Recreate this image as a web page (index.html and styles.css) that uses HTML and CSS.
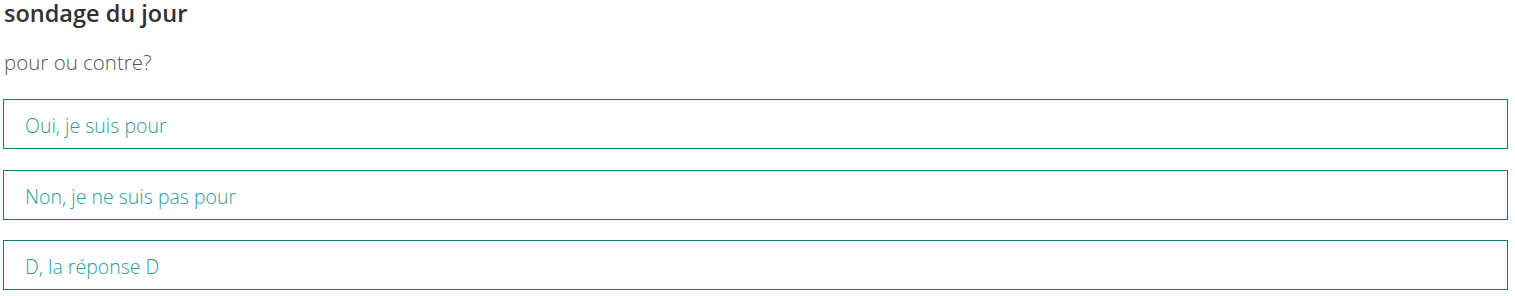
FILE: index.html
```html
<!DOCTYPE html>
<html lang="fr">
<head>
    <meta charset="UTF-8">
    <meta name="viewport" content="width=device-width, initial-scale=1.0">
    <title>Sondage du jour</title>
    <link rel="stylesheet" href="styles.css">
</head>
<body>
<div class="poll">
    <h1 class="poll-title">sondage du jour</h1>
    <p class="poll-question">pour ou contre?</p>

    <ul class="choices">
        <li class="choice">Oui, je suis pour</li>
        <li class="choice">Non, je ne suis pas pour</li>
        <li class="choice">D, la réponse D</li>
    </ul>
</div>
</body>
</html>
```

FILE: styles.css
```css
:root {
    --teal: #0f7b78;
    --teal-text: #2e9c9a;
    --text-dark: #323130;
    --text-gray: #555;
}

body, html {
    margin: 0;
    padding: 0;
    background: #fff;
    font-family: 'Open Sans', 'Noto Sans', sans-serif;
}

.poll {
    padding: 0 7px 0 3px;
}

.poll-title {
    margin: 0;
    padding: 0 0 0 1px;
    font-size: 23.5px;
    font-weight: 600;
    line-height: 26px;
    color: var(--text-dark);
}

.poll-question {
    margin: 24px 0 0 0;
    padding-left: 1px;
    font-size: 20.5px;
    font-weight: 300;
    line-height: 24px;
    color: var(--text-gray);
}

.choices {
    list-style: none;
    margin: 25px 0 0 0;
    padding: 0;
    display: flex;
    flex-direction: column;
    gap: 20.5px;
}

.choice {
    border: 1px solid var(--teal);
    display: flex;
    align-items: center;
    padding: 3px 0 0 21px;
    box-sizing: border-box;
    height: 50px;
    font-size: 19.5px;
    font-weight: 300;
    color: var(--teal-text);
}
```
